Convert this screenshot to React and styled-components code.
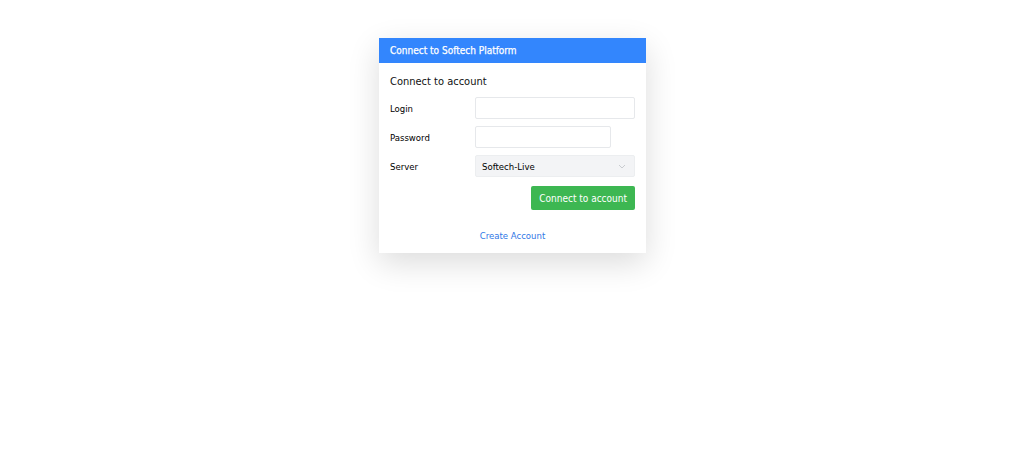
import React from 'react';
import styled, { createGlobalStyle } from 'styled-components';

const Global = createGlobalStyle`
  body {
    margin: 0;
    background: #fff;
    font-family: "DejaVu Sans Condensed", "DejaVu Sans", sans-serif;
  }
`;

const Page = styled.div`
  display: flex;
  justify-content: center;
  padding-top: 38px;
  padding-bottom: 40px;
  padding-left: 1px;
`;

const Card = styled.div`
  width: 267px;
  background: #fff;
  box-shadow: 0 10px 30px rgba(0, 0, 0, 0.14);
`;

const Header = styled.div`
  height: 25px;
  background: #3386fd;
  color: #fff;
  font-size: 10px;
  font-weight: normal;
  -webkit-text-stroke: 0.25px #fff;
  display: flex;
  align-items: center;
  padding: 0 11px;
`;

const Body = styled.div`
  padding: 12px 11px 10px;
`;

const Title = styled.div`
  font-size: 11px;
  color: #111;
  margin-bottom: 9px;
`;

const Row = styled.div`
  display: flex;
  align-items: center;
  height: 22px;
  margin-bottom: 7px;
`;

const Label = styled.label`
  width: 85px;
  font-size: 9.5px;
  color: #000;
`;

const Input = styled.input`
  box-sizing: border-box;
  height: 22px;
  width: ${p => p.$w}px;
  border: 1px solid #e6e8eb;
  border-radius: 2px;
  outline: none;
  padding: 0 6px;
`;

const Select = styled.div`
  box-sizing: border-box;
  height: 22px;
  width: 160px;
  background: #f3f4f6;
  border: 1px solid #eceef0;
  border-radius: 2px;
  display: flex;
  align-items: center;
  justify-content: space-between;
  padding: 0 8px 0 6px;
  font-size: 9.5px;
  color: #000;
`;

const Actions = styled.div`
  display: flex;
  justify-content: flex-end;
  margin-top: 9px;
`;

const Button = styled.button`
  height: 24px;
  padding: 0 8px;
  background: #3db752;
  color: #fff;
  border: none;
  border-radius: 2px;
  font-family: inherit;
  font-size: 10px;
`;

const LinkRow = styled.div`
  text-align: center;
  margin-top: 14px;
`;

const Link = styled.a`
  color: #2f78e6;
  font-size: 9.5px;
  text-decoration: none;
`;

export default function App() {
  return (
    <>
      <Global />
      <Page>
        <Card>
          <Header>Connect to Softech Platform</Header>
          <Body>
            <Title>Connect to account</Title>
            <Row>
              <Label>Login</Label>
              <Input $w={160} />
            </Row>
            <Row>
              <Label>Password</Label>
              <Input $w={136} type="password" />
            </Row>
            <Row>
              <Label>Server</Label>
              <Select>
                <span>Softech-Live</span>
                <svg width="8" height="5" viewBox="0 0 8 5">
                  <path d="M1 1l3 3 3-3" fill="none" stroke="#c4c7cc" strokeWidth="0.9" />
                </svg>
              </Select>
            </Row>
            <Actions>
              <Button>Connect to account</Button>
            </Actions>
            <LinkRow>
              <Link href="#">Create Account</Link>
            </LinkRow>
          </Body>
        </Card>
      </Page>
    </>
  );
}
